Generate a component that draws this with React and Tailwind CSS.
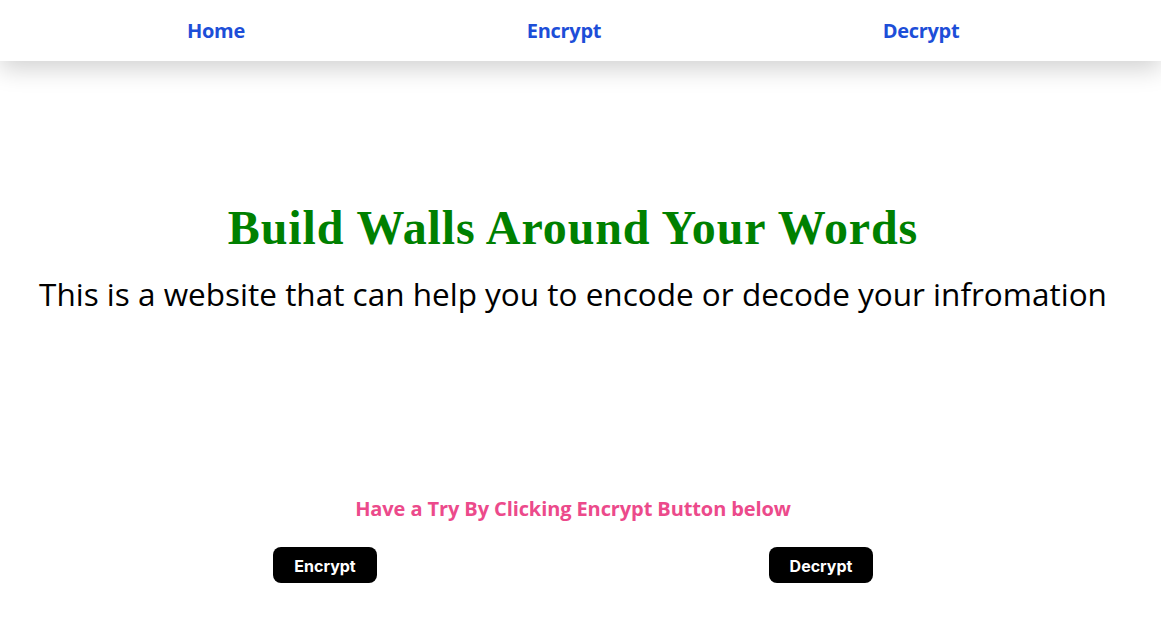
export default function App() {
  return (
    <div className="min-h-[631px] bg-white" style={{ fontFamily: '"Open Sans", sans-serif' }}>
      <nav className="h-[61px] bg-white shadow-[0_8px_24px_rgba(0,0,0,0.18)] flex items-center relative z-10">
        <div className="flex items-center pl-[116px] gap-[148px]">
          <a className="w-[200px] text-center text-[20px] font-bold text-[#1d4ed8] tracking-[-0.3px]">Home</a>
          <a className="w-[200px] text-center text-[20px] font-bold text-[#1d4ed8] tracking-[-0.3px]">Encrypt</a>
          <a className="w-[200px] text-center text-[20px] font-bold text-[#1d4ed8] tracking-[-0.3px] ml-[9px]">Decrypt</a>
        </div>
      </nav>
      <main className="pr-[15px] flex flex-col items-center">
        <h1
          className="mt-[139px] text-[48px] leading-[56px] font-bold text-[#008000] tracking-[0.9px]"
          style={{ fontFamily: '"Liberation Serif", serif' }}
        >
          Build Walls Around Your Words
        </h1>
        <p className="mt-[16px] text-[31.5px] leading-[44px] text-black">
          This is a website that can help you to encode or decode your infromation
        </p>
        <p className="mt-[179px] text-[20px] leading-[28px] font-bold text-[#ec4a8b] tracking-[-0.1px]">
          Have a Try By Clicking Encrypt Button below
        </p>
        <div className="mt-[24px] w-[992px] flex justify-around">
          <button
            className="w-[104px] h-[36px] pt-[2px] rounded-[8px] bg-black text-white text-[16px] font-bold"
            style={{ fontFamily: 'Inter, sans-serif' }}
          >
            Encrypt
          </button>
          <button
            className="w-[104px] h-[36px] pt-[2px] rounded-[8px] bg-black text-white text-[16px] font-bold"
            style={{ fontFamily: 'Inter, sans-serif' }}
          >
            Decrypt
          </button>
        </div>
      </main>
    </div>
  );
}
